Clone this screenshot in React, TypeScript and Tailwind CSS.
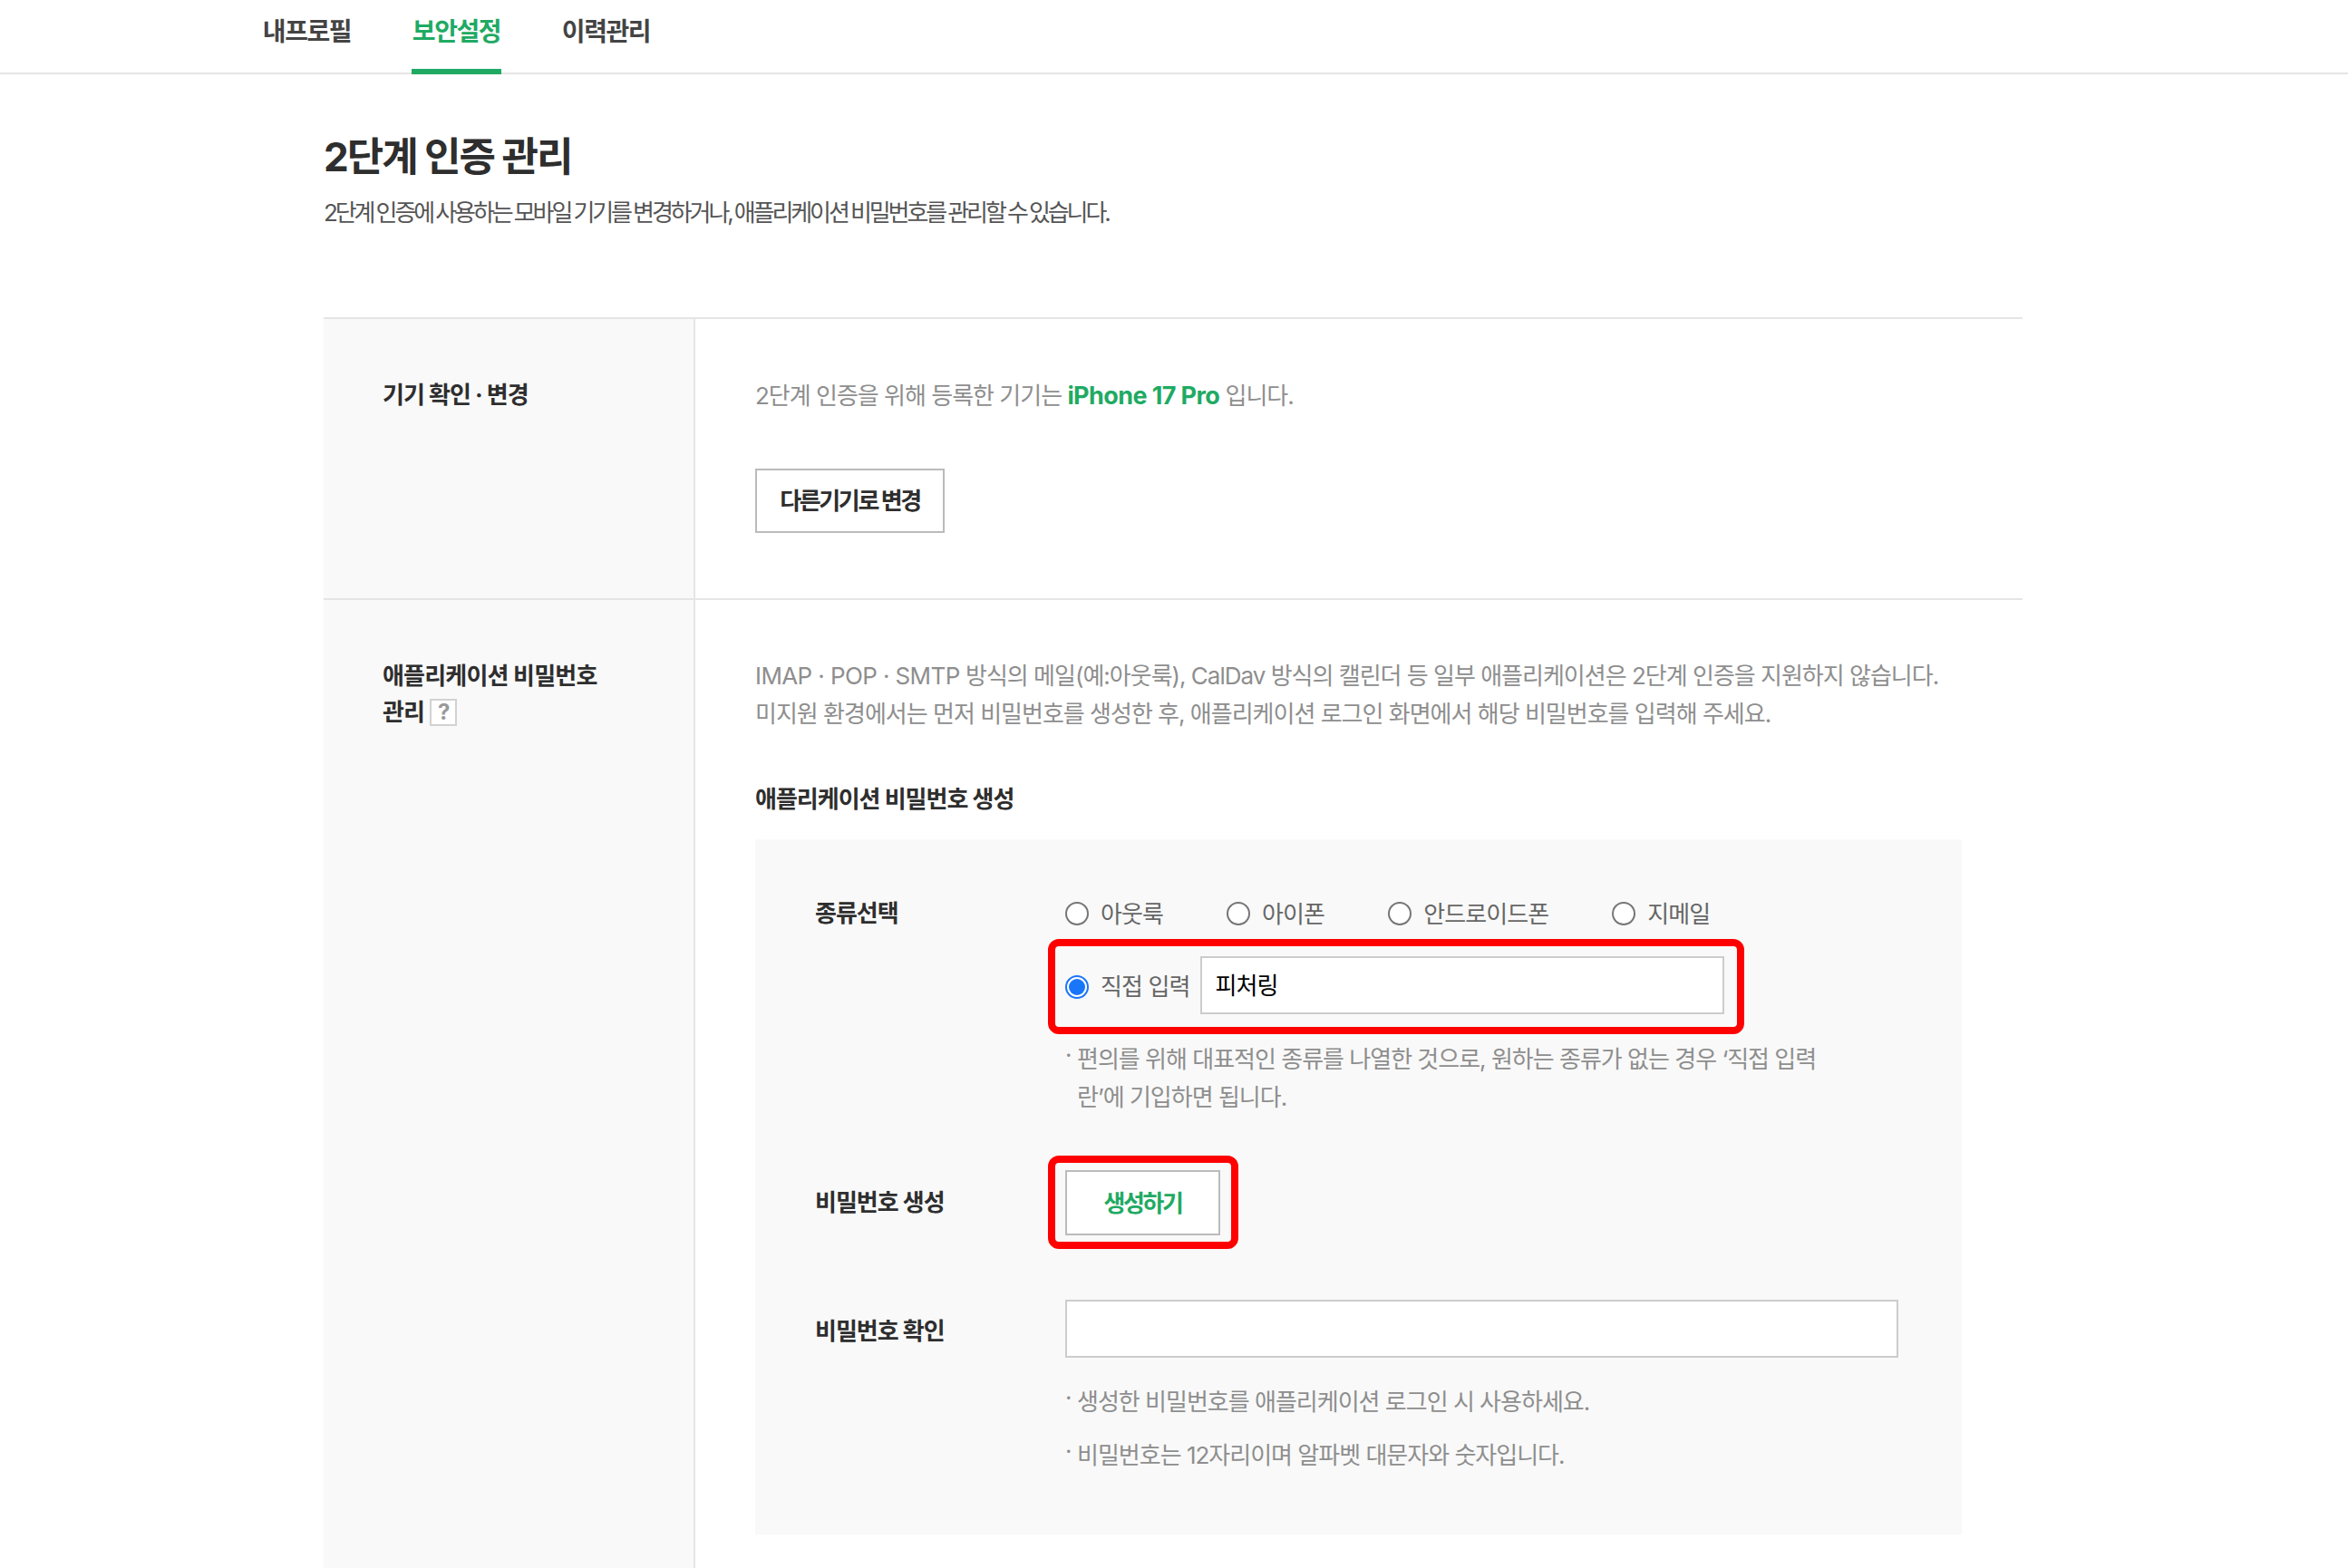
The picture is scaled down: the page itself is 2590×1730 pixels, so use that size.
import { JSX, ReactNode } from "react"

const tabs = ["내프로필", "보안설정", "이력관리"]
const kinds = ["아웃룩", "아이폰", "안드로이드폰", "지메일"]

function Radio({ checked = false }: { checked?: boolean }): JSX.Element {
  return (
    <span className={`flex h-[26px] w-[26px] shrink-0 items-center justify-center rounded-full border-2 bg-white ${checked ? "border-[#1a76f8]" : "border-[#767676]"}`}>
      {checked && <span className="h-[18px] w-[18px] rounded-full bg-[#1a76f8]" />}
    </span>
  )
}

function Note({ children }: { children: ReactNode }): JSX.Element {
  return (
    <p className="flex text-[26px] leading-[42px] tracking-[-1px] text-[#8e8e8e]">
      <span className="w-[13px] shrink-0 -translate-y-[5px]">·</span>
      <span>{children}</span>
    </p>
  )
}

function RedBox({ className }: { className: string }): JSX.Element {
  return <span className={`pointer-events-none absolute rounded-[12px] border-[8px] border-[#ff0000] ${className}`} />
}

export default function App(): JSX.Element {
  return (
    <div className="h-[1730px] overflow-hidden bg-white font-['Inter','Noto_Sans_CJK_KR',sans-serif]">
      <nav className="flex h-[82px] gap-[66px] border-b-2 border-[#e5e5e5] pl-[289px]">
        {tabs.map((tab, i) => (
          <div key={tab} className={`h-[82px] w-[99px] pt-[14px] text-center text-[28px] leading-[42px] font-bold tracking-[-1.4px] whitespace-nowrap ${i === 1 ? "border-b-[6px] border-[#1faa63] text-[#1faa63]" : "text-[#444444]"}`}>
            {tab}
          </div>
        ))}
      </nav>

      <main className="pl-[357px]">
        <h1 className="pt-[61px] text-[44px] leading-[60px] font-bold tracking-[-2px] text-[#2e2e2e]">2단계 인증 관리</h1>
        <p className="pt-[12px] text-[26px] leading-[40px] tracking-[-3.1px] [word-spacing:-1px] text-[#555555]">
          2단계 인증에 사용하는 모바일 기기를 변경하거나, 애플리케이션 비밀번호를 관리할 수 있습니다.
        </p>

        <div className="mt-[95px] w-[1874px] border-t-2 border-[#e5e5e5]">
          <section className="flex h-[310px] border-b-2 border-[#e5e5e5]">
            <div className="w-[410px] border-r-2 border-[#e5e5e5] bg-[#f9f9f9] pt-[64px] pl-[65px] text-[26px] leading-[40px] font-bold tracking-[-1px] text-[#2e2e2e]">
              기기 확인 · 변경
            </div>
            <div className="pt-[64px] pl-[66px]">
              <p className="text-[26px] leading-[42px] tracking-[-1px] text-[#8e8e8e]">
                2단계 인증을 위해 등록한 기기는 <b className="text-[27px] font-bold tracking-[-0.6px] text-[#1faa63]">iPhone 17 Pro</b> 입니다.
              </p>
              <button className="mt-[59px] h-[71px] w-[209px] border-2 border-[#bbbbbb] bg-white text-[26px] font-bold tracking-[-2.4px] text-[#2e2e2e]">
                다른기기로 변경
              </button>
            </div>
          </section>

          <section className="flex h-[1100px]">
            <div className="w-[410px] border-r-2 border-[#e5e5e5] bg-[#f9f9f9] pt-[64px] pl-[65px] text-[26px] leading-[40px] font-bold tracking-[-0.8px] text-[#2e2e2e]">
              <div>애플리케이션 비밀번호</div>
              <div className="flex items-center gap-[6px]">
                관리
                <span className="flex h-[30px] w-[30px] items-center justify-center border-2 border-[#d2d2d2] bg-white text-[24px] leading-none font-bold text-[#999999]">?</span>
              </div>
            </div>
            <div className="w-[1398px] pt-[63px] pl-[66px]">
              <p className="text-[26px] leading-[42px] tracking-[-1px] text-[#8e8e8e]">
                <span className="tracking-[-0.6px]">IMAP · POP · SMTP</span> 방식의 메일(예:아웃룩), CalDav 방식의 캘린더 등 일부 애플리케이션은 2단계 인증을 지원하지 않습니다.
                <br />
                미지원 환경에서는 먼저 비밀번호를 생성한 후, 애플리케이션 로그인 화면에서 해당 비밀번호를 입력해 주세요.
              </p>
              <h2 className="mt-[53px] text-[26px] leading-[40px] font-bold tracking-[-1px] text-[#2e2e2e]">애플리케이션 비밀번호 생성</h2>

              <div className="mt-[24px] h-[767px] w-[1331px] bg-[#f9f9f9] pt-[62px] pl-[66px]">
                <div className="flex">
                  <div className="w-[276px] text-[26px] leading-[40px] font-bold tracking-[-1px] text-[#2e2e2e]">종류선택</div>
                  <div>
                    <div className="flex h-[40px] items-center">
                      {kinds.map((kind) => (
                        <label key={kind} className="mr-[70px] flex items-center gap-[13px] text-[26px] tracking-[-0.9px] text-[#666666]">
                          <Radio />
                          {kind}
                        </label>
                      ))}
                    </div>
                    <div className="relative mt-[27px] flex h-[64px] w-[732px] items-center">
                      <RedBox className="-top-[19px] -right-[17px] -bottom-[22px] -left-[19px]" />
                      <label className="flex items-center gap-[13px] pt-[3px] text-[26px] tracking-[-0.9px] text-[#666666]">
                        <Radio checked />
                        직접 입력
                      </label>
                      <div className="ml-[11px] flex h-[64px] w-[578px] items-center border-2 border-[#cccccc] bg-white pl-[15px] text-[26px] tracking-[-0.9px] text-black">
                        피처링
                      </div>
                    </div>
                    <div className="mt-[29px] w-[850px]">
                      <Note>편의를 위해 대표적인 종류를 나열한 것으로, 원하는 종류가 없는 경우 ‘직접 입력란’에 기입하면 됩니다.</Note>
                    </div>
                  </div>
                </div>

                <div className="mt-[59px] flex items-center">
                  <div className="w-[276px] text-[26px] leading-[40px] font-bold tracking-[-1px] text-[#2e2e2e]">비밀번호 생성</div>
                  <div className="relative h-[72px] w-[171px]">
                    <RedBox className="-top-[16px] -right-[20px] -bottom-[15px] -left-[19px]" />
                    <button className="h-full w-full border-2 border-[#bbbbbb] bg-white text-[26px] font-bold tracking-[-2.4px] text-[#1faa63]">생성하기</button>
                  </div>
                </div>

                <div className="mt-[71px] flex items-center">
                  <div className="w-[276px] pt-[6px] text-[26px] leading-[40px] font-bold tracking-[-1px] text-[#2e2e2e]">비밀번호 확인</div>
                  <div className="h-[64px] w-[919px] border-2 border-[#cccccc] bg-white" />
                </div>

                <div className="mt-[28px] ml-[276px] flex flex-col gap-[17px]">
                  <Note>생성한 비밀번호를 애플리케이션 로그인 시 사용하세요.</Note>
                  <Note>비밀번호는 12자리이며 알파벳 대문자와 숫자입니다.</Note>
                </div>
              </div>
            </div>
          </section>
        </div>
      </main>
    </div>
  )
}
